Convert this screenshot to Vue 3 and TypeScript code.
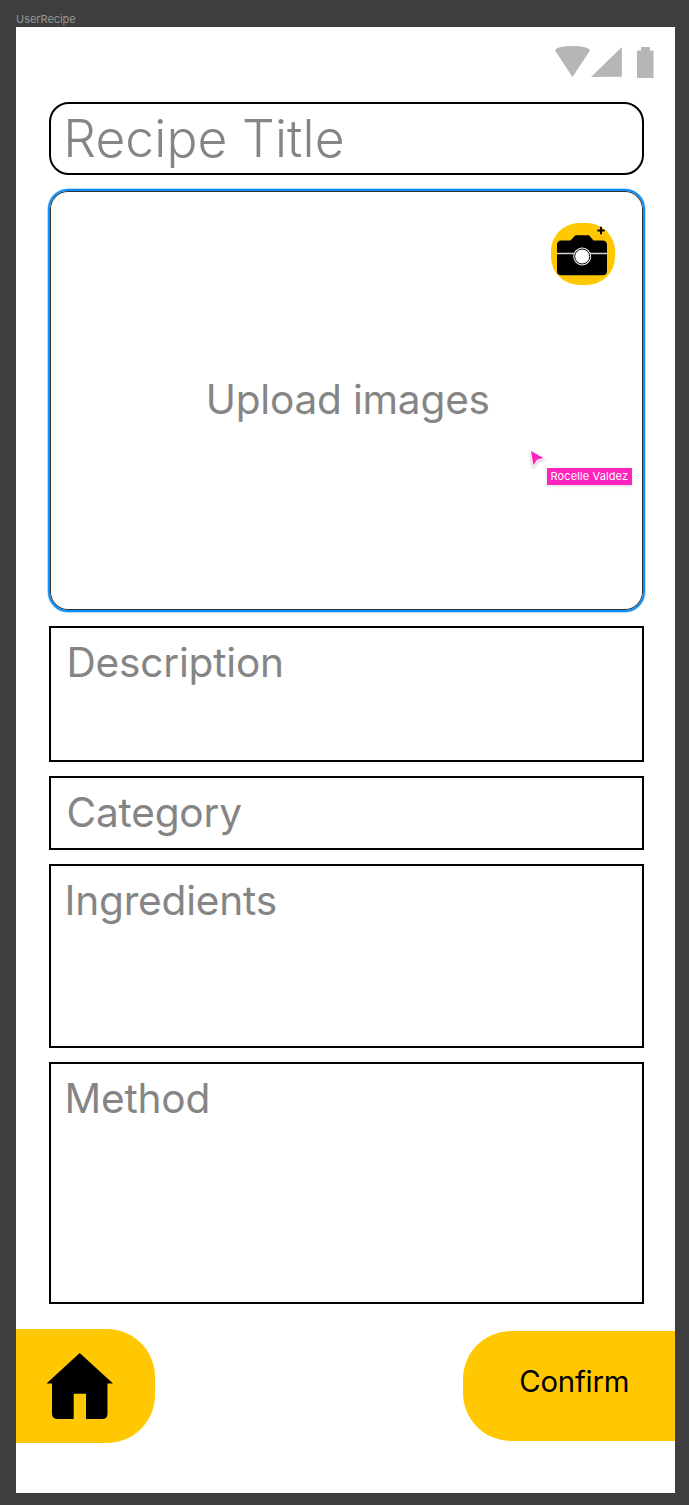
<script setup lang="ts">
interface Field {
  id: string
  label: string
}

const fields: Field[] = [
  { id: 'description', label: 'Description' },
  { id: 'category', label: 'Category' },
  { id: 'ingredients', label: 'Ingredients' },
  { id: 'method', label: 'Method' },
]
</script>

<template>
  <div class="canvas">
    <div class="frame-name">UserRecipe</div>
    <main class="frame">
      <header class="status">
        <svg width="100" height="34" viewBox="0 0 100 34" fill="#b7b5b6">
          <path d="M0 5.5Q2 1 17.5 1T35 5.5L17.5 32Z" />
          <path d="M36 32L66.8 2V31.8Z" />
          <path d="M82 5.5h4V2h9v3.500h3.500V33H82Z" />
        </svg>
      </header>

      <section class="box title"><span>Recipe Title</span></section>

      <section class="box upload">
        <button class="camera" aria-label="Add photo">
          <svg width="64" height="62" viewBox="0.5 0 64 62">
            <path d="M6.500 22Q6.500 17.500 11 17.500H20L25 12.200H38.500L43 17.500H52Q56.500 17.500 56.500 22V48Q56.500 52.300 52 52.300H11Q6.500 52.300 6.500 48Z" />
            <path d="M6.500 30.500H56.500" stroke="#d2d2d2" stroke-width="1.700" />
            <circle cx="31.700" cy="33.500" r="8.900" fill="#fff" />
            <circle cx="31.700" cy="33.500" r="7.500" fill="#fff" stroke="#000" stroke-width="1" />
            <path d="M50.500 3.800V11.200M46.800 7.500H54.200" stroke="#000" stroke-width="2" />
          </svg>
        </button>
        <span class="prompt">Upload images</span>
        <div class="cursor">
          <svg class="pointer" width="24" height="28" viewBox="0 0 24 28">
            <path d="M4 3L16.500 10L10.200 11.700L6.300 17.500Z" fill="#ff24bd" stroke="#fff" stroke-width="2.400" stroke-linejoin="round" paint-order="stroke" />
          </svg>
          <span class="user">Rocelle Valdez</span>
        </div>
      </section>

      <section v-for="field in fields" :key="field.id" class="box field" :class="field.id">
        <span>{{ field.label }}</span>
      </section>

      <footer class="actions">
        <button class="home" aria-label="Home">
          <svg width="68" height="68" viewBox="0 0 68 68">
            <path d="M33.700 1L67 31.600H61.500V61.500Q61.500 67 56 67H40V41.800H27.700V67H12Q6 67 6 61.500V31.600H.5Z" />
          </svg>
        </button>
        <button class="confirm"><span>Confirm</span></button>
      </footer>
    </main>
  </div>
</template>

<style>
body {
  margin: 0;
  background: #3e3e3e;
}
</style>

<style scoped>
.canvas {
  box-sizing: border-box;
  height: 1505px;
  padding: 12px 14px 12px 15.5px;
  overflow: hidden;
  background: #3e3e3e;
  font-family: Inter, "Liberation Sans", sans-serif;
}
.frame-name {
  height: 15px;
  padding-left: 0.5px;
  font-size: 11px;
  line-height: 15px;
  letter-spacing: -0.05px;
  color: #969696;
}
.frame {
  box-sizing: border-box;
  display: flex;
  flex-direction: column;
  height: 1466px;
  background: #fff;
}
.status {
  flex: none;
  display: flex;
  justify-content: flex-end;
  height: 75px;
  padding: 17.500px 20.500px 0 0;
  box-sizing: border-box;
}
.status svg {
  display: block;
}
.box {
  flex: none;
  box-sizing: border-box;
  margin: 0 31px 0 33px;
  border: 2px solid #000;
  color: #858585;
  font-size: 40.600px;
  font-weight: 400;
  line-height: 50px;
  letter-spacing: -0.2px;
  white-space: nowrap;
}
.title {
  height: 73px;
  padding: 9px 0 0 12.800px;
  border-radius: 20px;
  font-size: 51.500px;
  font-weight: 300;
  letter-spacing: 0.12px;
}
.upload {
  position: relative;
  display: flex;
  justify-content: center;
  height: 423px;
  margin: 14px 30px 14px 32px;
  padding: 184px 0 0 3px;
  border: 2px solid #0f8ff5;
  border-radius: 20px;
  box-shadow: inset 0 0 0 1px #333, 0 0 0 0.500px #6fbcf8;
}
.camera {
  position: absolute;
  top: 32px;
  right: 28px;
  width: 64px;
  height: 62px;
  padding: 0;
  border: 0;
  border-radius: 28px;
  background: #ffc803;
}
.camera svg {
  display: block;
}
.cursor {
  position: absolute;
  top: 257px;
  left: 477px;
  display: flex;
}
.pointer {
  filter: drop-shadow(0 1px 1px rgba(0, 0, 0, 0.25));
}
.user {
  height: 17px;
  margin: 20px 0 0 -4px;
  padding: 0 4px;
  background: #ff24bd;
  box-shadow: 0 1px 3px rgba(0, 0, 0, 0.15);
  color: #fff;
  font-size: 11px;
  font-weight: 400;
  line-height: 17px;
  letter-spacing: 0.12px;
}
.field {
  padding: 10px 0 0 16px;
}
.description {
  height: 136px;
}
.category {
  height: 74px;
  margin-top: 14px;
}
.ingredients {
  height: 184px;
  margin-top: 14px;
  padding-left: 14px;
}
.method {
  height: 242px;
  margin-top: 14px;
  padding-left: 14px;
}
.actions {
  display: flex;
  justify-content: space-between;
  align-items: flex-start;
  margin-top: 25px;
}
.home {
  width: 139.500px;
  height: 114px;
  padding: 0 0 0 30px;
  border: 0;
  border-radius: 0 48px 48px 0;
  background: #ffc803;
}
.home svg {
  display: block;
}
.confirm {
  width: 212.500px;
  height: 110px;
  margin-top: 2px;
  padding: 0 0 10px 11px;
  border: 0;
  border-radius: 48px 0 0 48px;
  background: #ffc803;
  color: #000;
  font-family: inherit;
  font-size: 29.300px;
  font-weight: 400;
  letter-spacing: -0.2px;
}
</style>
